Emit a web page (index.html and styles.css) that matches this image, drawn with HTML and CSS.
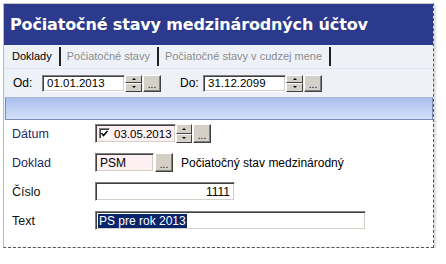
FILE: index.html
```html
<!DOCTYPE html>
<html lang="sk">
<head>
  <meta charset="UTF-8">
  <title>Počiatočné stavy medzinárodných účtov</title>
  <link rel="stylesheet" href="styles.css">
</head>
<body>

  <div class="window">
    <div class="titlebar">Počiatočné stavy medzinárodných účtov</div>

    <div class="tabs">
      <div class="tab active">Doklady</div>
      <div class="tab">Počiatočné stavy</div>
      <div class="tab">Počiatočné stavy v cudzej mene</div>
    </div>

    <div class="filter">
      <span class="flabel">Od:</span>
      <div class="field small w-date">01.01.2013</div>
      <div class="spin"><span class="up"></span><span class="down"></span></div>
      <div class="btn">...</div>
      <span class="flabel do">Do:</span>
      <div class="field small w-date">31.12.2099</div>
      <div class="spin"><span class="up"></span><span class="down"></span></div>
      <div class="btn">...</div>
    </div>

    <div class="bar"></div>

    <div class="form">
      <div class="row">
        <span class="label req">Dátum</span>
        <div class="field pink w-datum">
          <span class="check">
            <svg width="7" height="7" viewBox="0 0 7 7"><polyline points="0.5,3 2.5,5.5 6.5,1" fill="none" stroke="#000" stroke-width="1.5"/></svg>
          </span>
          03.05.2013
        </div>
        <div class="spin tall"><span class="up"></span><span class="down"></span></div>
        <div class="btn tall">...</div>
      </div>

      <div class="row">
        <span class="label req">Doklad</span>
        <div class="field pink w-psm">PSM</div>
        <div class="btn tall">...</div>
        <span class="note">Počiatočný stav medzinárodný</span>
      </div>

      <div class="row">
        <span class="label">Číslo</span>
        <div class="field w-cislo right">1111</div>
      </div>

      <div class="row">
        <span class="label">Text</span>
        <div class="field w-text"><span class="sel">PS pre rok 2013</span></div>
      </div>
    </div>
  </div>

</body>
</html>
```

FILE: styles.css
```css
/* Basic styling */
body {
  margin: 0;
  background: #fff;
  font-family: "Liberation Sans", Arial, sans-serif;
  font-size: 12px;
  color: #000;
}

.window {
  margin: 3px 0 0 3px;
  width: 431px;
  height: 245px;
  box-sizing: border-box;
  display: flex;
  flex-direction: column;
  border-left: 1px solid #b8b8b8;
  border-top: 1px solid #c8c8c8;
  border-right: 1px dashed #555;
  border-bottom: 1px dashed #555;
  box-shadow: 2px 2px 2px rgba(0, 0, 0, 0.15);
  background: #eef2f8;
}

/* Title */
.titlebar {
  height: 41px;
  flex: none;
  display: flex;
  align-items: center;
  padding-left: 6px;
  background: #2c3a8d;
  color: #fff;
  font-family: "DejaVu Sans", Verdana, sans-serif;
  font-weight: bold;
  font-size: 16px;
  letter-spacing: -0.15px;
}

/* Tabs */
.tabs {
  height: 23px;
  flex: none;
  display: flex;
  align-items: center;
  padding-left: 8px;
  font-size: 11px;
}

.tab {
  height: 19px;
  line-height: 19px;
  padding-right: 7px;
  margin-right: 6px;
  border-right: 2px solid #222;
  color: #8c8c8c;
}

.tab.active {
  color: #000;
}

/* Filter row */
.filter {
  height: 28px;
  flex: none;
  display: flex;
  align-items: center;
  padding-left: 9px;
  border-top: 1px solid #dfe5ef;
  font-size: 11px;
}

.flabel {
  width: 29px;
  font-size: 12px;
}

.flabel.do {
  margin-left: 19px;
  width: 23px;
}

/* Inputs */
.field {
  height: 19px;
  box-sizing: border-box;
  display: flex;
  align-items: center;
  padding: 0 4px;
  background: #fff;
  border: 1px solid;
  border-color: #808080 #fff #fff #808080;
  box-shadow: inset 1px 1px 0 #404040, inset -1px -1px 0 #d4d0c8;
  white-space: nowrap;
}

.field.small {
  height: 17px;
  font-size: 11.5px;
}

.field.pink {
  background: #fcf0f2;
}

.field.right {
  justify-content: flex-end;
}

.w-date { width: 83px; }
.w-datum { width: 81px; padding-left: 3px; font-size: 11.5px; }
.w-psm { width: 59px; }
.w-cislo { width: 140px; }
.w-text { width: 271px; padding-left: 2px; }

.sel {
  background: #0a246a;
  color: #fff;
  padding: 0 1px;
}

.check {
  width: 11px;
  height: 11px;
  box-sizing: border-box;
  margin-right: 4px;
  flex: none;
  display: flex;
  align-items: center;
  justify-content: center;
  background: #fff;
  border: 1px solid;
  border-color: #808080 #fff #fff #808080;
  box-shadow: inset 1px 1px 0 #404040;
}

/* Spinner and button */
.spin {
  width: 17px;
  height: 17px;
  flex: none;
  display: flex;
  flex-direction: column;
}

.spin.tall {
  width: 16px;
  height: 19px;
}

.spin span {
  flex: 1;
  box-sizing: border-box;
  display: flex;
  align-items: center;
  justify-content: center;
  background: #d4d0c8;
  border: 1px solid;
  border-color: #fff #404040 #404040 #fff;
}

.spin .up::after,
.spin .down::after {
  content: "";
  border-left: 2px solid transparent;
  border-right: 2px solid transparent;
}

.spin .up::after {
  border-bottom: 2px solid #000;
}

.spin .down::after {
  border-top: 2px solid #000;
}

.btn {
  width: 18px;
  height: 17px;
  margin-left: 1px;
  flex: none;
  box-sizing: border-box;
  display: flex;
  align-items: flex-end;
  justify-content: center;
  padding-bottom: 2px;
  background: #d4d0c8;
  border: 1px solid;
  border-color: #fff #404040 #404040 #fff;
  box-shadow: inset -1px -1px 0 #808080;
  font-size: 10px;
  line-height: 8px;
}

.btn.tall {
  height: 19px;
}

/* Blue header strip */
.bar {
  height: 23px;
  flex: none;
  margin-left: 1px;
  box-sizing: border-box;
  border: 1px solid #7a8cb4;
  border-top-color: #a9b8d6;
  background: linear-gradient(#a9bfee, #d3e0f8);
}

/* Form */
.form {
  flex: 1;
  background: #fff;
  padding: 4px 0 0 8px;
}

.row {
  display: flex;
  align-items: center;
  height: 19px;
  margin-bottom: 10px;
}

.label {
  width: 83px;
  flex: none;
  font-size: 12.5px;
  color: #111;
}

.label.req {
  color: #1c2a66;
}

.note {
  margin-left: 8px;
}
```
